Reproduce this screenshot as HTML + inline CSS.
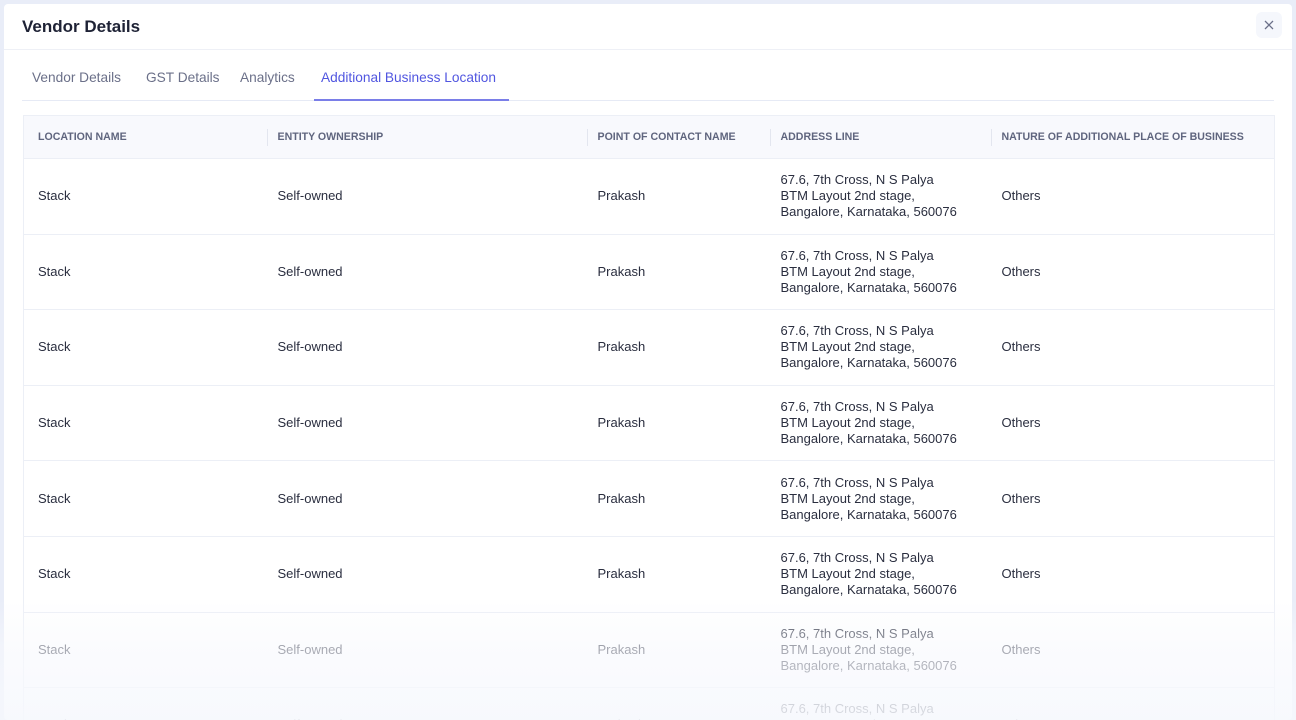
<!DOCTYPE html>
<html><head><style>
*{margin:0;padding:0;box-sizing:border-box}
html,body{width:1296px;height:720px;overflow:hidden}
body{background:#e9edf8;font-family:"Liberation Sans",sans-serif;position:relative}
.modal{position:absolute;left:4px;top:4px;width:1288px;height:716px;background:#fff;border-radius:4px;overflow:hidden}
.title{position:absolute;left:18px;top:13px;font-size:17px;font-weight:bold;color:#1e2235}
.close{position:absolute;left:1252px;top:8px;width:26px;height:26px;border-radius:6px;background:#f5f7fc}
.hdiv{position:absolute;left:0;right:0;top:45px;height:1px;background:#eef0f6}
.tabs{position:absolute;left:18px;top:45px;width:1252px;height:52px;border-bottom:1px solid #e6eaf5}
.tab{position:absolute;top:21px;font-size:13.7px;color:#6b7089}
.tab.a{color:#5156e0}
.ul{position:absolute;left:292px;top:50px;width:195px;height:2px;background:#7a7ee8}
.wrap{position:absolute;left:19px;top:111px;width:1252px;height:610px;overflow:hidden}
table{width:1252px;border-collapse:collapse;border:1px solid #eceff6;font-size:13px;color:#2a2e3f;table-layout:fixed}
th{height:43px;background:#f8f9fd;text-align:left;font-size:10.6px;font-weight:bold;color:#5f657e;padding-left:11px;position:relative;border-bottom:1px solid #eceff6;white-space:nowrap}
th:first-child,td:first-child{padding-left:14px}
th+th:before{content:"";position:absolute;left:0;top:13px;height:17px;width:1px;background:#e3e6ef}
td{height:75.6px;padding-left:11px;border-bottom:1px solid #eceff6;line-height:16px;vertical-align:middle}
.fade{position:absolute;left:0;top:600px;width:1296px;height:120px;background:linear-gradient(rgba(248,249,253,0),rgba(248,249,253,0.6) 40%,rgba(246,248,253,0.88))}
</style></head><body>
<div class="modal">
<div class="title">Vendor Details</div>
<div class="close"><svg width="26" height="26" viewBox="0 0 26 26"><path d="M9 9L17 17M17 9L9 17" stroke="#6b7089" stroke-width="1.3"/></svg></div>
<div class="hdiv"></div>
<div class="tabs">
<div class="tab" style="left:10px">Vendor Details</div>
<div class="tab" style="left:124px">GST Details</div>
<div class="tab" style="left:218px">Analytics</div>
<div class="tab a" style="left:299px">Additional Business Location</div>
<div class="ul"></div>
</div>
<div class="wrap">
<table>
<colgroup><col style="width:243px"><col style="width:320px"><col style="width:183px"><col style="width:221px"><col></colgroup>
<tr><th>LOCATION NAME</th><th>ENTITY OWNERSHIP</th><th>POINT OF CONTACT NAME</th><th>ADDRESS LINE</th><th>NATURE OF ADDITIONAL PLACE OF BUSINESS</th></tr>
<tr><td>Stack</td><td>Self-owned</td><td>Prakash</td><td>67.6, 7th Cross, N S Palya<br>BTM Layout 2nd stage,<br>Bangalore, Karnataka, 560076</td><td>Others</td></tr>
<tr><td>Stack</td><td>Self-owned</td><td>Prakash</td><td>67.6, 7th Cross, N S Palya<br>BTM Layout 2nd stage,<br>Bangalore, Karnataka, 560076</td><td>Others</td></tr>
<tr><td>Stack</td><td>Self-owned</td><td>Prakash</td><td>67.6, 7th Cross, N S Palya<br>BTM Layout 2nd stage,<br>Bangalore, Karnataka, 560076</td><td>Others</td></tr>
<tr><td>Stack</td><td>Self-owned</td><td>Prakash</td><td>67.6, 7th Cross, N S Palya<br>BTM Layout 2nd stage,<br>Bangalore, Karnataka, 560076</td><td>Others</td></tr>
<tr><td>Stack</td><td>Self-owned</td><td>Prakash</td><td>67.6, 7th Cross, N S Palya<br>BTM Layout 2nd stage,<br>Bangalore, Karnataka, 560076</td><td>Others</td></tr>
<tr><td>Stack</td><td>Self-owned</td><td>Prakash</td><td>67.6, 7th Cross, N S Palya<br>BTM Layout 2nd stage,<br>Bangalore, Karnataka, 560076</td><td>Others</td></tr>
<tr><td>Stack</td><td>Self-owned</td><td>Prakash</td><td>67.6, 7th Cross, N S Palya<br>BTM Layout 2nd stage,<br>Bangalore, Karnataka, 560076</td><td>Others</td></tr>
<tr><td>Stack</td><td>Self-owned</td><td>Prakash</td><td>67.6, 7th Cross, N S Palya<br>BTM Layout 2nd stage,<br>Bangalore, Karnataka, 560076</td><td>Others</td></tr>
</table>
</div>
</div>
<div class="fade"></div>
</body></html>
